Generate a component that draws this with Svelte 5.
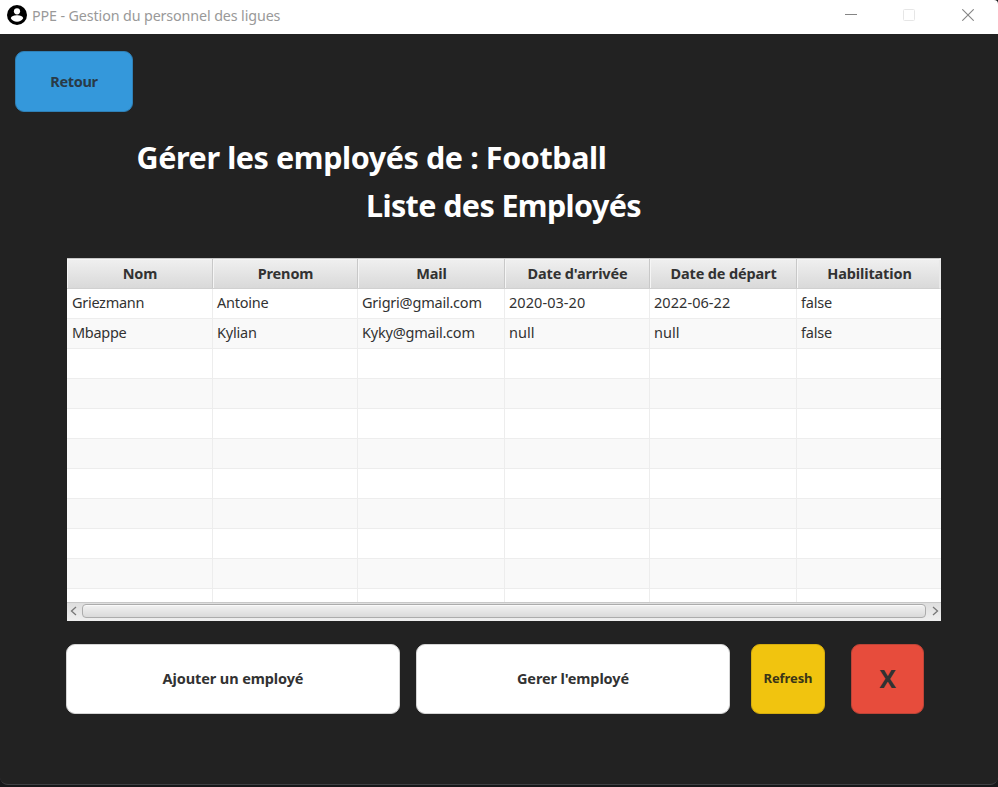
<script>
  const columns = [
    { title: 'Nom', width: 146, key: 'nom' },
    { title: 'Prenom', width: 145, key: 'prenom' },
    { title: 'Mail', width: 147, key: 'mail' },
    { title: "Date d'arrivée", width: 145, key: 'arrivee', date: true },
    { title: 'Date de départ', width: 147, key: 'depart', date: true },
    { title: 'Habilitation', width: 144, key: 'habilitation' }
  ];
  const employees = [
    { nom: 'Griezmann', prenom: 'Antoine', mail: 'Grigri@gmail.com', arrivee: '2020-03-20', depart: '2022-06-22', habilitation: 'false' },
    { nom: 'Mbappe', prenom: 'Kylian', mail: 'Kyky@gmail.com', arrivee: 'null', depart: 'null', habilitation: 'false' }
  ];
  const rows = Array.from({ length: 11 }, (_, i) => employees[i] ?? {});
</script>

<div class="window">
  <header class="titlebar">
    <svg class="user" width="20" height="20" viewBox="0 0 20 20">
      <circle cx="10" cy="10" r="10" fill="#000" />
      <circle cx="10" cy="6.3" r="3.1" fill="#fff" />
      <path d="M3.8 13.2C4.2 10.9 7.6 10.2 10 10.2s5.800.7 6.200 3C15 15.400 12.700 16.800 10 16.800S5 15.400 3.800 13.200z" fill="#fff" />
    </svg>
    <span class="title">PPE - Gestion du personnel des ligues</span>
    <div class="controls">
      <svg width="12" height="12" viewBox="0 0 12 12"><path d="M0 5.500H12" stroke="#858585" /></svg>
      <svg width="12" height="12" viewBox="0 0 12 12"><rect x=".5" y=".5" width="11" height="11" rx="1" fill="none" stroke="#e6e6e6" /></svg>
      <svg class="close" width="12" height="12" viewBox="0 0 12 12"><path d="M.3.3l11.400 11.400M11.700.3L.3 11.700" stroke="#858585" stroke-width="1.100" /></svg>
    </div>
  </header>

  <main>
    <button class="back">Retour</button>
    <h1>Gérer les employés de : Football</h1>
    <h2>Liste des Employés</h2>

    <section class="table">
      <div class="head">
        {#each columns as c}
          <div class="th" style="width: {c.width}px">{c.title}</div>
        {/each}
      </div>
      <div class="body">
        {#each rows as row}
          <div class="row">
            {#each columns as c}
              <div class="td" class:date={c.date} style="width: {c.width}px">{row[c.key] ?? ''}</div>
            {/each}
          </div>
        {/each}
      </div>
      <div class="scroll">
        <svg width="7" height="10" viewBox="0 0 7 10"><path d="M6 1L1.500 5 6 9" fill="none" stroke="#777" stroke-width="1.300" /></svg>
        <div class="thumb"></div>
        <svg width="7" height="10" viewBox="0 0 7 10"><path d="M1 1l4.500 4L1 9" fill="none" stroke="#777" stroke-width="1.300" /></svg>
      </div>
    </section>

    <div class="actions">
      <button class="add">Ajouter un employé</button>
      <button class="manage">Gerer l'employé</button>
      <button class="refresh">Refresh</button>
      <button class="delete">X</button>
    </div>
  </main>
  <footer></footer>
</div>

<style>
  :global(body) { background: #17181a; overflow: hidden; }
  .window {
    width: 998px;
    height: 787px;
    display: flex;
    flex-direction: column;
    font-family: "Noto Sans", "Open Sans", sans-serif;
    color: #323232;
    box-sizing: border-box;
    background: #17181a;
  }
  .titlebar {
    height: 34px;
    flex: none;
    background: #fff;
    border-top-right-radius: 4px;
    display: flex;
    align-items: center;
    padding: 0 24px 4px 7px;
    box-sizing: border-box;
  }
  .title { margin-left: 5px; color: #999; font-size: 14.300px; line-height: 20px; letter-spacing: -0.12px; white-space: nowrap; padding-top: 2px; }
  .controls { margin-left: auto; display: flex; gap: 46px; }
  .close { margin-left: 1px; }
  svg { display: block; flex: none; }
  main {
    height: 751px;
    box-sizing: border-box;
    background: #222;
    border-bottom: 1px solid #404144;
    border-radius: 0 0 8px 8px;
    padding: 17px 0 0;
    display: flex;
    flex-direction: column;
    align-items: flex-start;
  }
  button {
    font: bold 14.500px/20px "Noto Sans", "Open Sans", sans-serif;
    letter-spacing: -0.1px;
    color: #323232;
    border: 1px solid #d5d5d5;
    border-radius: 9px;
    padding: 0 0 3px;
    height: 70px;
    background: #fff;
    white-space: nowrap;
  }
  .back { width: 118px; height: 61px; margin-left: 15px; padding-bottom: 2px; background: #3498db; border-color: #2f80b6; color: #293a47; letter-spacing: -0.3px; }
  h1, h2 { margin: 0; color: #fff; font-size: 30.500px; line-height: 48px; font-weight: bold; white-space: nowrap; }
  h1 { margin: 21px 0 0 136.500px; letter-spacing: -0.41px; }
  h2 { margin-left: 366px; letter-spacing: -0.62px; }
  .table {
    width: 874px;
    height: 363px;
    margin: 29px 0 0 67px;
    display: flex;
    flex-direction: column;
    background: #fff;
    overflow: hidden;
  }
  .head {
    display: flex;
    height: 31px;
    flex: none;
    box-sizing: border-box;
    background: linear-gradient(#f0f0f0, #d9d9d9);
    border-top: 1px solid #c8c8c8;
    border-bottom: 1px solid #d0d0d0;
    border-right: 2px solid #e9e9e9;
  }
  .th {
    box-sizing: border-box;
    border-right: 1px solid #c8c8c8;
    box-shadow: inset 1px 1px #f5f5f5;
    text-align: center;
    padding-left: 1px;
    font-size: 14.500px;
    letter-spacing: -0.14px;
    line-height: 28px;
    font-weight: bold;
    flex: none;
    white-space: nowrap;
  }
  .body { height: 313px; flex: none; overflow: hidden; }
  .row { display: flex; height: 30px; background: #fff; box-sizing: border-box; border-bottom: 1px solid #ededed; }
  .row:nth-child(even) { background: #f9f9f9; }
  .td {
    box-sizing: border-box;
    border-right: 1px solid #ededed;
    padding-left: 4px;
    font-size: 14.500px;
    letter-spacing: -0.22px;
    line-height: 26px;
    flex: none;
    white-space: nowrap;
  }
  .td:first-child { padding-left: 5px; letter-spacing: -0.3px; }
  .td.date { letter-spacing: 0.06px; }
  .td:last-child, .th:last-child { border-right: 0; }
  .scroll {
    height: 19px;
    box-sizing: border-box;
    border-top: 1px solid #c8c8c8;
    background: linear-gradient(#dedede, #efefef);
    display: flex;
    align-items: center;
    padding: 0 2px 2px 3px;
    gap: 5px;
  }
  .thumb {
    flex: 1;
    height: 14px;
    margin-right: 1px;
    box-sizing: border-box;
    border: 1px solid #acacac;
    border-radius: 4px;
    background: linear-gradient(#f2f2f2, #dadada);
    box-shadow: inset 0 1px #fafafa;
  }
  .actions { display: flex; margin: 23px 0 0 66px; }
  .add { width: 334px; }
  .manage { width: 314px; margin-left: 16px; }
  .refresh { width: 74px; margin-left: 21px; background: #f1c40f; border-color: #d5ad0e; font-size: 13px; color: #3a3517; }
  .delete { width: 73px; margin-left: 26px; background: #e74c3c; border-color: #bd4437; font-size: 25px; }
  footer { flex: 1; background: #17181a; }
</style>
